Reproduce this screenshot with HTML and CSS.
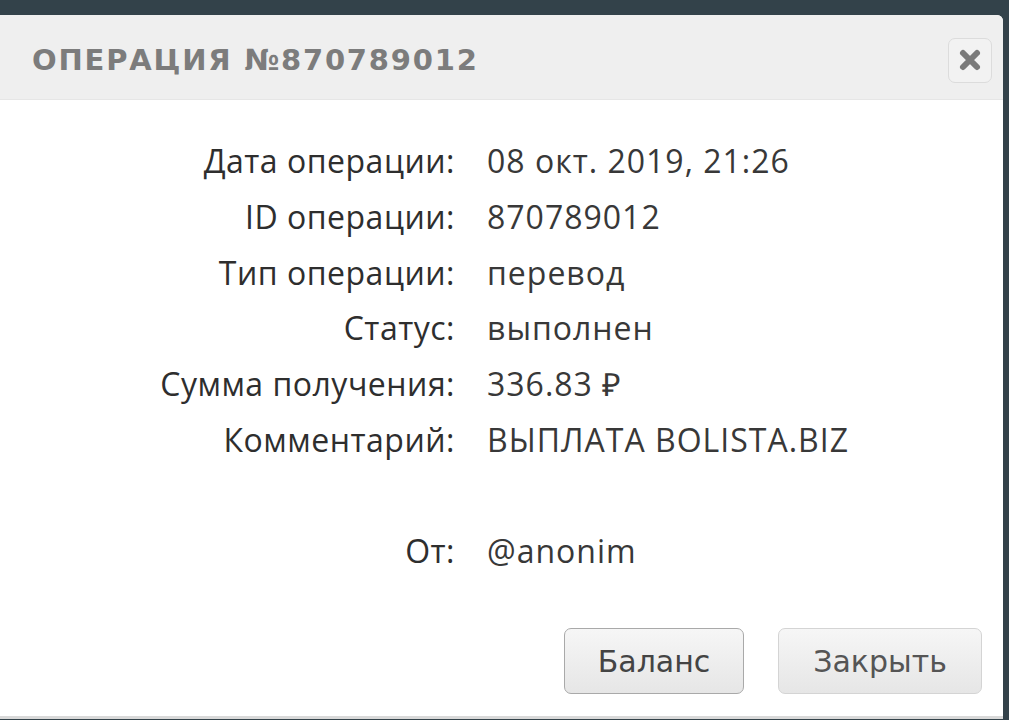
FILE: index.html
```html
<!DOCTYPE html>
<html lang="ru">
<head>
  <meta charset="UTF-8" />
  <meta name="viewport" content="width=device-width, initial-scale=1.0"/>
  <title>Операция №870789012</title>
  <link rel="stylesheet" href="styles.css">
</head>
<body>
  <div class="modal">
    <div class="modal-header">
      <h2>Операция №870789012</h2>
      <button class="close-btn" title="Закрыть">
        <svg width="24" height="24" viewBox="0 0 24 24">
          <path d="M5 5 L19 19 M19 5 L5 19" stroke="#7a7a7a" stroke-width="6" stroke-linecap="round"/>
        </svg>
      </button>
    </div>

    <div class="modal-body">
      <div class="details">
        <span class="label">Дата операции:</span>
        <span class="value">08 окт. 2019, 21:26</span>

        <span class="label">ID операции:</span>
        <span class="value">870789012</span>

        <span class="label">Тип операции:</span>
        <span class="value">перевод</span>

        <span class="label">Статус:</span>
        <span class="value">выполнен</span>

        <span class="label">Сумма получения:</span>
        <span class="value">336.83 ₽</span>

        <span class="label">Комментарий:</span>
        <span class="value">ВЫПЛАТА BOLISTA.BIZ</span>

        <span class="label"></span>
        <span class="value"></span>

        <span class="label">От:</span>
        <span class="value">@anonim</span>
      </div>
    </div>

    <div class="modal-footer">
      <button class="btn btn-main">Баланс</button>
      <button class="btn">Закрыть</button>
    </div>
  </div>
</body>
</html>
```

FILE: styles.css
```css
body {
  margin: 0;
  background-color: #33424a;
  font-family: "Open Sans", Arial, sans-serif;
  height: 720px;
  overflow: hidden;
}

.modal {
  margin: 15px 6px 0 0;
  height: 701px;
  background: #fff;
  border-top-right-radius: 6px;
  border-bottom: 3px solid #d9d9d9;
  display: flex;
  flex-direction: column;
}

.modal-header {
  height: 85px;
  background: #efefef;
  border-bottom: 1px solid #e6e6e6;
  border-top-right-radius: 6px;
  display: flex;
  align-items: center;
  justify-content: space-between;
  padding: 6px 11px 0 32px;
  box-sizing: border-box;
}

.modal-header h2 {
  margin: 0;
  font-family: "DejaVu Sans", sans-serif;
  font-weight: bold;
  font-size: 29px;
  letter-spacing: 1.8px;
  text-transform: uppercase;
  color: #7c7c7c;
}

.close-btn {
  width: 44px;
  height: 45px;
  padding: 0;
  border: 1px solid #dcdcdc;
  border-radius: 7px;
  background: #f2f2f2;
  display: flex;
  align-items: center;
  justify-content: center;
}

.modal-body {
  flex: 1;
  padding-top: 33px;
}

.details {
  display: grid;
  grid-template-columns: 455px 1fr;
  column-gap: 32px;
  grid-auto-rows: 55.7px;
  align-items: center;
  font-size: 32px;
  font-weight: 500;
  color: #2e2e2e;
}

.label {
  text-align: right;
  letter-spacing: 0.5px;
}

.value {
  color: #383838;
  letter-spacing: 1px;
}

.modal-footer {
  display: flex;
  justify-content: flex-end;
  gap: 34px;
  padding: 0 21px 22px 0;
}

.btn {
  width: 204px;
  height: 66px;
  font-family: "DejaVu Sans", Verdana, sans-serif;
  font-size: 30px;
  color: #555;
  background: linear-gradient(#f6f6f6, #e6e6e6);
  border: 1px solid #d4d4d4;
  border-radius: 7px;
}

.btn-main {
  width: 180px;
  color: #444;
  border-color: #a9a9a9;
}
```
